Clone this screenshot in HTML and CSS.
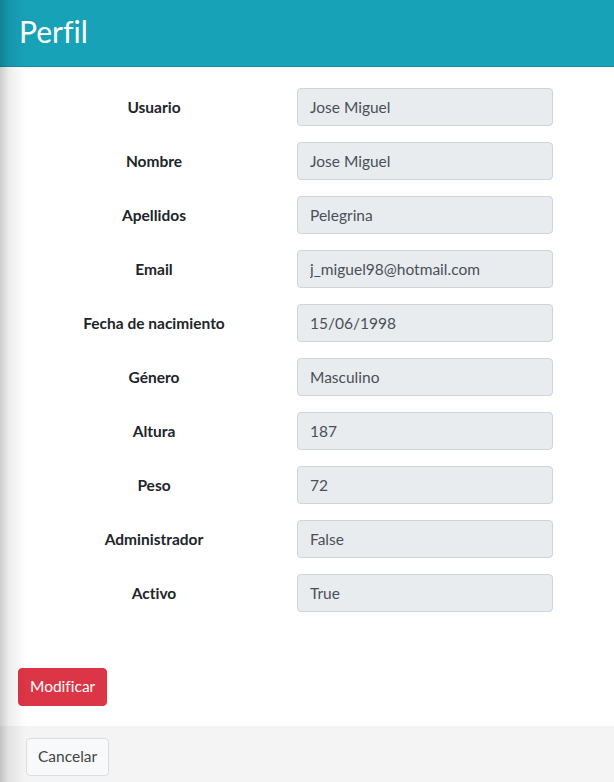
FILE: index.html
```html
<!DOCTYPE html>
<html lang="es">
<head>
<meta charset="utf-8">
<title>Perfil</title>
<link rel="stylesheet" href="styles.css">
</head>
<body>
<div class="modal">
  <div class="modal-header">
    <h4 class="modal-title">Perfil</h4>
  </div>
  <div class="modal-body">
    <form class="profile-form">
      <div class="form-row"><label class="form-label">Usuario</label><input class="form-control" type="text" value="Jose Miguel" readonly></div>
      <div class="form-row"><label class="form-label">Nombre</label><input class="form-control" type="text" value="Jose Miguel" readonly></div>
      <div class="form-row"><label class="form-label">Apellidos</label><input class="form-control" type="text" value="Pelegrina" readonly></div>
      <div class="form-row"><label class="form-label">Email</label><input class="form-control" type="text" value="j_miguel98@hotmail.com" readonly></div>
      <div class="form-row"><label class="form-label">Fecha de nacimiento</label><input class="form-control" type="text" value="15/06/1998" readonly></div>
      <div class="form-row"><label class="form-label">Género</label><input class="form-control" type="text" value="Masculino" readonly></div>
      <div class="form-row"><label class="form-label">Altura</label><input class="form-control" type="text" value="187" readonly></div>
      <div class="form-row"><label class="form-label">Peso</label><input class="form-control" type="text" value="72" readonly></div>
      <div class="form-row"><label class="form-label">Administrador</label><input class="form-control" type="text" value="False" readonly></div>
      <div class="form-row"><label class="form-label">Activo</label><input class="form-control" type="text" value="True" readonly></div>
    </form>
    <button class="btn btn-danger" type="button">Modificar</button>
  </div>
  <div class="modal-footer">
    <button class="btn btn-default" type="button">Cancelar</button>
  </div>
</div>
</body>
</html>
```
FILE: styles.css
```css
* { box-sizing: border-box; }
html, body {
  margin: 0;
  padding: 0;
  background: #ffffff;
}
body {
  font-family: "Lato", "Liberation Sans", sans-serif;
  font-variant-ligatures: none;
  color: #212529;
  font-size: 15px;
}
.modal {
  position: relative;
  width: 614px;
  min-height: 782px;
  display: flex;
  flex-direction: column;
  background: #ffffff;
}
.modal::before {
  content: "";
  position: absolute;
  left: 0;
  top: 0;
  bottom: 0;
  width: 26px;
  background: linear-gradient(to right, rgba(0,0,0,0.2), rgba(0,0,0,0.07) 35%, rgba(0,0,0,0));
  pointer-events: none;
  z-index: 2;
}
.modal-header {
  background: #17a2b8;
  height: 67px;
  border-bottom: 1px solid #148ea1;
  padding: 0 19px;
  display: flex;
  align-items: center;
}
.modal-title {
  margin: 0;
  color: #ffffff;
  font-weight: 400;
  font-size: 30px;
  line-height: 1;
  padding-bottom: 4px;
  font-variant-ligatures: none;
}
.modal-body {
  padding: 21px 18px 20px 18px;
  flex: 1;
}
.profile-form {
  display: flex;
  flex-direction: column;
  gap: 16px;
  margin: 0 0 56px 0;
}
.form-row {
  display: grid;
  grid-template-columns: 256px 256px;
  column-gap: 15px;
  padding-left: 8px;
  align-items: center;
}
.form-label {
  text-align: center;
  font-weight: 700;
  font-size: 15.5px;
}
.form-control {
  height: 38px;
  width: 256px;
  margin: 0;
  padding: 0 12px;
  background: #e9ecef;
  border: 1px solid #ced4da;
  border-radius: 4px;
  font-family: inherit;
  font-size: 15.5px;
  color: #495057;
  outline: none;
}
.btn {
  font-family: inherit;
  font-variant-ligatures: none;
  font-size: 15.5px;
  height: 38px;
  padding: 0 11px;
  border-radius: 4px;
  cursor: pointer;
  line-height: 1;
}
.btn-danger {
  background: #dc3545;
  border: 1px solid #dc3545;
  color: #ffffff;
}
.modal-footer {
  background: #f4f4f4;
  height: 56px;
  padding: 12px 26px 0 26px;
}
.btn-default {
  background: #f8f9fa;
  border: 1px solid #dddddd;
  color: #444444;
}
```
